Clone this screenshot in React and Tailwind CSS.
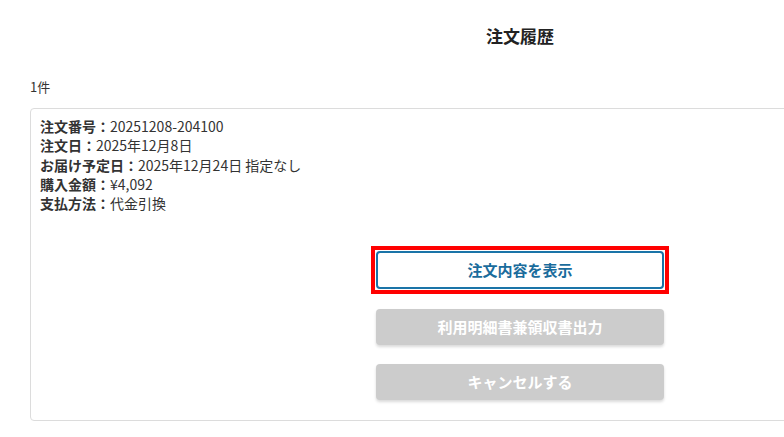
export default function App() {
  const font = { fontFamily: '"Noto Sans CJK JP", "Noto Sans", sans-serif' };
  return (
    <div className="w-[784px] h-[437px] overflow-hidden bg-white text-[#333]" style={font}>
      <div className="w-[1040px] px-[30px]">
        <div className="h-[72px] flex items-center justify-center text-[17px] font-bold text-[#222]">
          注文履歴
        </div>
        <div className="mt-[5px] mb-[11px] text-[13px] leading-[20px]">1件</div>
        <div className="border border-[#dcdcdc] rounded-[4px] h-[313px] pt-[8px] px-[9px]">
          <div className="text-[14px] leading-[19.3px]">
            <div><span className="font-bold">注文番号：</span>20251208-204100</div>
            <div><span className="font-bold">注文日：</span>2025年12月8日</div>
            <div><span className="font-bold">お届け予定日：</span>2025年12月24日 指定なし</div>
            <div><span className="font-bold">購入金額：</span>¥4,092</div>
            <div><span className="font-bold">支払方法：</span>代金引換</div>
          </div>
          <div className="flex flex-col items-center mt-[33px]">
            <div className="border-4 border-[#ff0000] p-px">
              <button className="w-[288px] h-[38px] border-2 border-[#1a74a8] rounded-[4px] bg-white text-[#1a6c9c] text-[15px] font-bold flex items-center justify-center">
                注文内容を表示
              </button>
            </div>
            <button className="mt-[15px] w-[288px] h-[36px] rounded-[4px] bg-[#cccccc] text-white text-[15px] font-bold flex items-center justify-center shadow-[0_2px_3px_rgba(0,0,0,0.15)]">
              利用明細書兼領収書出力
            </button>
            <button className="mt-[19px] w-[288px] h-[36px] rounded-[4px] bg-[#cccccc] text-white text-[15px] font-bold flex items-center justify-center shadow-[0_2px_3px_rgba(0,0,0,0.15)]">
              キャンセルする
            </button>
          </div>
        </div>
      </div>
    </div>
  );
}
